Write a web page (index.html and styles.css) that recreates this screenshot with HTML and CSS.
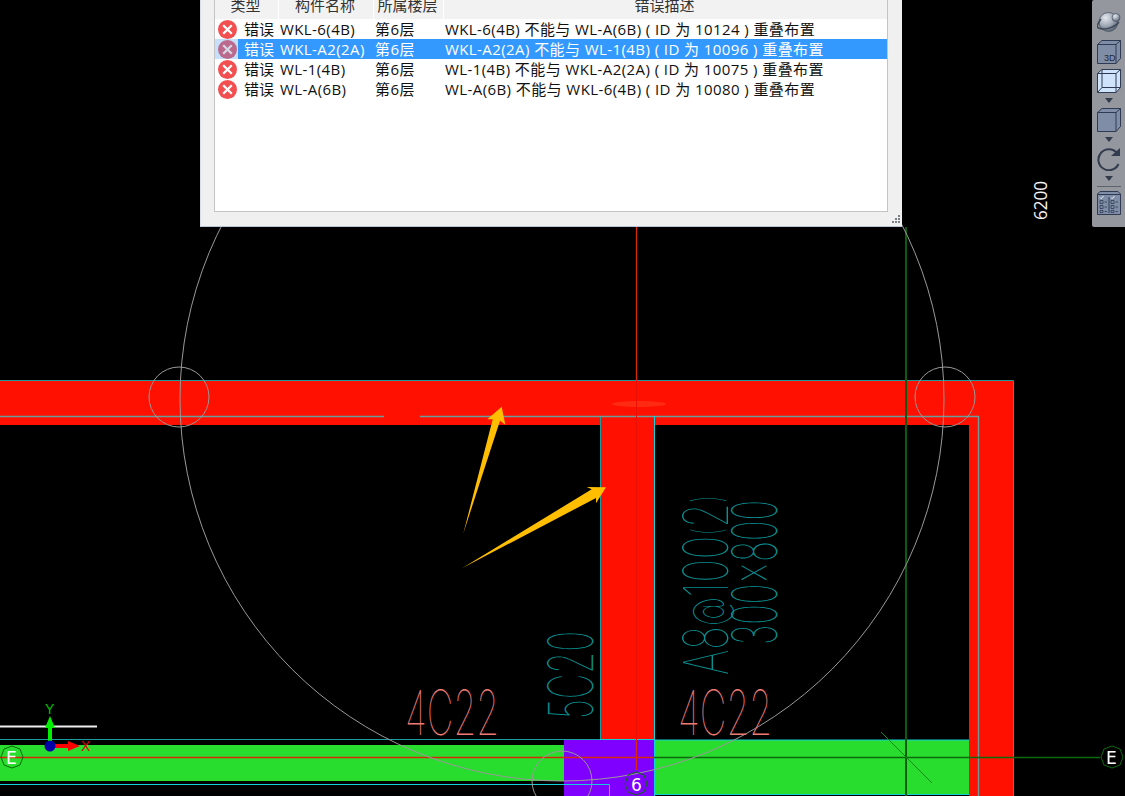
FILE: index.html
```html
<!DOCTYPE html>
<html lang="zh-CN">
<head>
<meta charset="utf-8">
<title>CAD</title>
<link rel="stylesheet" href="styles.css">
</head>
<body>
<main class="stage">
  <svg class="cad" viewBox="0 0 1125 796" width="1125" height="796">
    <g class="red">
      <rect x="0" y="380" width="1013" height="45"/>
      <rect x="969" y="380" width="44" height="416"/>
      <rect x="600" y="416" width="54" height="324"/>
    </g>
    <ellipse class="glow" cx="639" cy="404" rx="27" ry="3"/>
    <g class="green">
      <rect x="0" y="745" width="564" height="36"/>
      <rect x="654" y="740" width="315" height="54"/>
    </g>
    <rect class="purple" x="564" y="740" width="90" height="56"/>

    <g class="ln teal">
      <path d="M0 380.5H1013.5V796"/>
      <path d="M0 739.5H600"/>
      <path d="M600.5 416V740"/>
    </g>
    <g class="ln grey2">
      <path d="M0 416.5H384M420 416.5H978.5V796"/>
    </g>
    <g class="ln cyan">
      <path d="M654.5 416V796"/>
      <path d="M654 740H969M654 794.5H969"/>
      <path d="M0 784.5H609.5V796"/>
      <path d="M600 739.5H654"/>
    </g>
    <g class="ln thinred">
      <path d="M636.5 227V380"/>
      <path d="M0 757.5H654"/>
      <path d="M636.5 740V770"/>
    </g>
    <path class="ln darkred" d="M636.5 380V740"/>
    <g class="ln dkgreen wide">
      <path d="M906 227V796"/>
    </g>
    <path class="ln dkgreen hline" d="M654 757.5H1100"/>
    <path class="ln midgreen" d="M881 732L932 783"/>

    <g class="ln arc">
      <circle cx="562" cy="399" r="382"/>
      <circle cx="179" cy="397" r="30"/>
      <circle cx="945" cy="397" r="30"/>
      <circle cx="562" cy="781" r="30"/>
    </g>

    <polygon class="arrow" points="463.3,533.5 492.7,419.3 487.3,419.3 501.7,406.7 505.3,424.7 500,420.7"/>
    <polygon class="arrow" points="462,568.3 591.7,489.3 586.7,487 606,487.3 596,503.3 596,498"/>

    <g class="ln white"><path d="M0 726.5H97"/></g>
    <rect class="gx" x="48" y="726" width="4" height="16"/>
    <polygon class="gx" points="50,716 45,728 55,728"/>
    <rect class="rx" x="54" y="744" width="16" height="4"/>
    <polygon class="rx" points="80,746 68,741 68,751"/>
    <circle class="bx" cx="50" cy="746" r="5.5"/>
    <text class="axis gt" x="45" y="714">Y</text>
    <text class="axis rt" x="81" y="751">X</text>

    <g class="ln dkgreen">
      <polygon points="12,746 20,749 23,757 20,765 12,768 4,765 1,757 4,749"/>
      <polygon points="1112,746 1120,749 1123,757 1120,765 1112,768 1104,765 1101,757 1104,749"/>
      <polygon points="636,772 644,775 647,784 644,792 636,795 628,792 625,784 628,775"/>
    </g>
    <text class="tag" x="6" y="764">E</text>
    <text class="tag" x="1106" y="764">E</text>
    <text class="tag" x="631" y="791">6</text>

    <text class="cadtext salmon" x="405" y="735" textLength="94" lengthAdjust="spacingAndGlyphs">4C22</text>
    <text class="cadtext salmon" x="678" y="735" textLength="94" lengthAdjust="spacingAndGlyphs">4C22</text>
    <text class="cadtext tealtext" transform="translate(593 719) rotate(-90)" textLength="88" lengthAdjust="spacingAndGlyphs">5C20</text>
    <text class="cadtext tealtext" transform="translate(728 675) rotate(-90)" textLength="180" lengthAdjust="spacingAndGlyphs">A8<tspan class="sm" dy="-3">@</tspan><tspan dy="3">100</tspan><tspan class="par" dy="-7">(</tspan><tspan dy="7">2</tspan><tspan class="par" dy="-7">)</tspan></text>
    <text class="cadtext tealtext" transform="translate(777 645) rotate(-90)" textLength="145" lengthAdjust="spacingAndGlyphs">300x800</text>
    <text class="dim" transform="translate(1047 220) rotate(-90)" textLength="39" lengthAdjust="spacingAndGlyphs">6200</text>
  </svg>

  <section class="dialog">
    <div class="list">
      <div class="head">
        <span>类型</span><span>构件名称</span><span>所属楼层</span><span>错误描述</span>
      </div>
      <div class="row">
        <div class="type"><svg class="err" viewBox="0 0 20 20"><circle cx="10" cy="10" r="10"/><path d="M5.5 5.5L14.5 14.5M14.5 5.5L5.5 14.5"/></svg><span>错误</span></div>
        <span>WKL-6(4B)</span><span>第6层</span><span>WKL-6(4B) 不能与 WL-A(6B) ( ID 为 10124 ) 重叠布置</span>
      </div>
      <div class="row selected">
        <div class="type"><svg class="err" viewBox="0 0 20 20"><circle cx="10" cy="10" r="10"/><path d="M5.5 5.5L14.5 14.5M14.5 5.5L5.5 14.5"/></svg><span>错误</span></div>
        <span>WKL-A2(2A)</span><span>第6层</span><span>WKL-A2(2A) 不能与 WL-1(4B) ( ID 为 10096 ) 重叠布置</span>
      </div>
      <div class="row">
        <div class="type"><svg class="err" viewBox="0 0 20 20"><circle cx="10" cy="10" r="10"/><path d="M5.5 5.5L14.5 14.5M14.5 5.5L5.5 14.5"/></svg><span>错误</span></div>
        <span>WL-1(4B)</span><span>第6层</span><span>WL-1(4B) 不能与 WKL-A2(2A) ( ID 为 10075 ) 重叠布置</span>
      </div>
      <div class="row">
        <div class="type"><svg class="err" viewBox="0 0 20 20"><circle cx="10" cy="10" r="10"/><path d="M5.5 5.5L14.5 14.5M14.5 5.5L5.5 14.5"/></svg><span>错误</span></div>
        <span>WL-A(6B)</span><span>第6层</span><span>WL-A(6B) 不能与 WKL-6(4B) ( ID 为 10080 ) 重叠布置</span>
      </div>
    </div>
    <svg class="grip" viewBox="0 0 9 9" width="9" height="9"><path d="M7 0h2v2H7zM4 3h2v2H4zM7 3h2v2H7zM1 6h2v2H1zM4 6h2v2H4zM7 6h2v2H7z"/></svg>
  </section>

  <aside class="toolbar">
    <svg class="tool" viewBox="0 0 24 24">
      <defs>
        <radialGradient id="ball" cx="0.35" cy="0.28" r="0.8"><stop offset="0" stop-color="#e4e8ee"/><stop offset="0.5" stop-color="#a4adba"/><stop offset="1" stop-color="#4c5868"/></radialGradient>
      </defs>
      <circle class="orb" cx="11.5" cy="12" r="9.5" fill="url(#ball)"/>
      <path class="ring" d="M4 9C1 13 -1 17 1.5 18C6 20 16 19 22 12"/>
      <circle class="orb" cx="19" cy="7.5" r="4" fill="url(#ball)"/>
    </svg>
    <svg class="tool gap2" viewBox="0 0 24 24">
      <path class="face" d="M0.5 4.5L5 0.5H23.5V18.5L19 23.5H0.5Z"/>
      <path class="edge" d="M0.5 4.5H19V23.5M19 4.5L23.5 0.5"/>
      <text class="tool3d" x="7" y="21">3D</text>
    </svg>
    <svg class="tool gap1" viewBox="0 0 24 24">
      <path class="glass" d="M0.5 4.5L5 0.5H23.5V18.5L19 23.5H0.5Z"/>
      <path class="edge" d="M0.5 4.5H19V23.5M19 4.5L23.5 0.5M5 0.5V18.5H23.5M5 18.5L0.5 23.5"/>
    </svg>
    <svg class="caret" viewBox="0 0 8 5"><path d="M0 0H8L4 5Z"/></svg>
    <svg class="tool" viewBox="0 0 24 24">
      <path class="face" d="M0.5 4.5L5 0.5H23.5V18.5L19 23.5H0.5Z"/>
      <path class="edge" d="M0.5 4.5H19V23.5M19 4.5L23.5 0.5"/>
    </svg>
    <svg class="caret" viewBox="0 0 8 5"><path d="M0 0H8L4 5Z"/></svg>
    <svg class="tool" viewBox="0 0 24 24">
      <path class="spin" d="M20 6A10.5 10.5 0 1 0 21.5 17"/>
      <path class="spinhead" d="M14 9H23V1Z"/>
    </svg>
    <svg class="caret" viewBox="0 0 8 5"><path d="M0 0H8L4 5Z"/></svg>
    <div class="sep"></div>
    <svg class="tool" viewBox="0 0 24 24">
      <path class="face" d="M0.5 3L3 0.5H21L23.5 3V23.5H0.5Z"/>
      <path class="edge" d="M0.5 3.5H23.5M12 6V22"/>
      <path class="tick" d="M3 6.5l1.2 1.2L6.5 5M14 6.5l1.2 1.2L17.5 5"/>
      <path class="edge thin" d="M3 9.5h3v3h-3zM3 14.5h3v3h-3zM3 19.5h3v2h-3zM14 9.5h3v3h-3zM14 14.5h3v3h-3zM14 19.5h3v2h-3zM7.5 11h2.5M7.5 16h2.5M7.5 20.5h2.5M18.5 11h2.5M18.5 16h2.5M18.5 20.5h2.5"/>
    </svg>
  </aside>
</main>
</body>
</html>
```
FILE: styles.css
```css
html, body {
  margin: 0;
  padding: 0;
  background: #000;
}
.stage {
  position: relative;
  width: 1125px;
  height: 796px;
  overflow: hidden;
  background: #000;
}
.cad {
  display: block;
}
.red rect { fill: #ff1000; }
.glow { fill: #ff2a12; }
.green rect { fill: #29dd2e; }
.purple { fill: #8000ff; }
.ln { fill: none; stroke-width: 1; }
.teal { stroke: #1a9c9c; }
.grey2 { stroke: #6b9c9c; stroke-width: 1.4; }
.cyan { stroke: #12d0d8; }
.thinred { stroke: #d82808; stroke-width: 1.3; }
.darkred { stroke: #e80f04; }
.dkgreen { stroke: #0c6a0c; }
.dkgreen.wide { stroke: #0d5c0d; stroke-width: 2; }
.dkgreen.hline { stroke-width: 1.4; }
.midgreen { stroke: #0d8a12; }
.arc { stroke: #999; }
.white { stroke: #eee; stroke-width: 2; }
.arrow { fill: #ffbf00; }
.gx { fill: #00f000; }
.rx { fill: #ff0000; }
.bx { fill: #0000a8; }
.axis {
  font-family: "Liberation Sans", sans-serif;
  font-size: 14px;
}
.gt { fill: #00c000; }
.rt { fill: #e00000; }
.tag {
  font-family: "DejaVu Sans", sans-serif;
  font-size: 17px;
  fill: #fff;
}
.cadtext {
  font-family: Inter, sans-serif;
  font-weight: 100;
  font-size: 62px;
}
.cadtext .sm { font-size: 46px; }
.cadtext .par { font-size: 40px; }
.salmon { fill: #ee7a72; }
.tealtext { fill: #0a9090; }
.dim {
  font-family: "Open Sans", sans-serif;
  font-size: 18px;
  fill: #f4f4f4;
}

.dialog {
  position: absolute;
  left: 200px;
  top: -10px;
  width: 702px;
  height: 237px;
  box-sizing: border-box;
  padding: 0 14px 14px 13px;
  background: #f0f0f0;
  border-bottom: 1px solid #b9c4d4;
  border-left: 1px solid #d8dde8;
  font-family: "Open Sans", "Noto Sans CJK SC", sans-serif;
  font-size: 15px;
  color: #111;
}
.list {
  box-sizing: border-box;
  height: 100%;
  background: #fff;
  border: 1px solid #c4c4c4;
  border-top: 0;
}
.head, .row {
  display: grid;
  grid-template-columns: 63px 95px 70px 1fr;
}
.head {
  height: 29px;
  overflow: hidden;
  background: #f2f2f2;
  line-height: 31px;
  color: #333;
}
.head span {
  text-align: center;
  padding-right: 2px;
}
.head span + span {
  border-left: 1px solid #fff;
}
.row {
  height: 20px;
  line-height: 20px;
  white-space: pre;
}
.row > span {
  padding-left: 2px;
  letter-spacing: 0.42px;
}
.type {
  display: flex;
  align-items: center;
  gap: 7px;
  padding-left: 3px;
}
.err {
  width: 19px;
  height: 19px;
  flex: none;
}
.err circle { fill: #f34e50; }
.err path { stroke: #fff; stroke-width: 2.4; fill: none; }
.selected {
  background: #3399ff;
  color: #fff;
}
.selected .type {
  background: linear-gradient(90deg, #c6e0fb 23px, #3399ff 23px);
}
.selected .err circle { fill: #bb6a8e; }
.selected .err path { stroke: #d6d6e4; }
.grip {
  position: absolute;
  right: 2px;
  bottom: 2px;
  fill: #7a7f88;
}

.toolbar {
  position: absolute;
  left: 1092px;
  top: 0;
  width: 33px;
  height: 227px;
  box-sizing: border-box;
  padding-top: 10px;
  display: flex;
  flex-direction: column;
  align-items: center;
  gap: 4px;
  background: #94979d;
  border-radius: 2px 0 0 2px;
}
.tool {
  width: 24px;
  height: 24px;
  flex: none;
}
.gap1 { margin-top: 1px; }
.gap2 { margin-top: 2px; }
.caret {
  width: 8px;
  height: 5px;
  margin: 1px 0;
  flex: none;
  fill: #333c4c;
}
.sep {
  width: 24px;
  height: 1px;
  flex: none;
  background: #5e626a;
}
.face { fill: #7f8ea6; stroke: #2f3b52; stroke-width: 1; }
.glass { fill: #cfe4fb; stroke: #2f3b52; stroke-width: 1; }
.edge { fill: none; stroke: #2f3b52; stroke-width: 1; }
.edge.thin { stroke-width: 0.8; }
.tick { fill: none; stroke: #f2f4f8; stroke-width: 1; }
.orb { stroke: #4c5868; stroke-width: 0.8; }
.ring { fill: none; stroke: #3e4756; stroke-width: 1.5; }
.spin { fill: none; stroke: #333c4e; stroke-width: 2; }
.spinhead { fill: #333c4e; }
.tool3d {
  font-family: "Liberation Sans", sans-serif;
  font-size: 9px;
  fill: #1f2838;
}
```
